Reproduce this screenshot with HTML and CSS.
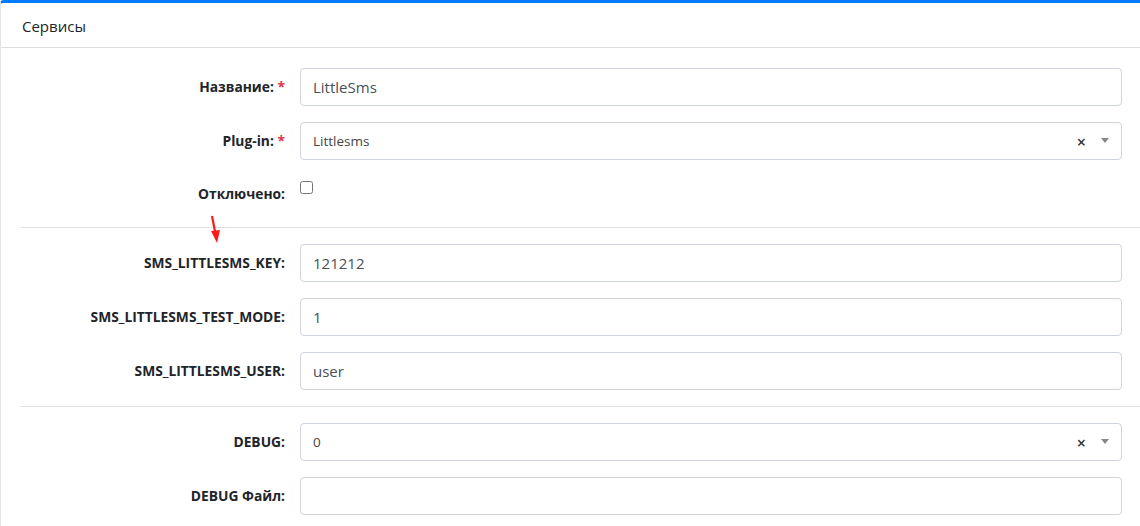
FILE: index.html
```html
<!DOCTYPE html>
<html lang="ru">
<head>
    <meta charset="UTF-8">
    <meta name="viewport" content="width=device-width, initial-scale=1.0">
    <title>Сервисы</title>
    <link rel="stylesheet" href="styles.css">
</head>
<body>
    <div class="card">
        <div class="card-header">Сервисы</div>
        <div class="card-body">
            <div class="form-row">
                <label class="col-label">Название: <span class="req">*</span></label>
                <div class="col-field"><input type="text" class="form-control" value="LittleSms"></div>
            </div>
            <div class="form-row">
                <label class="col-label">Plug-in: <span class="req">*</span></label>
                <div class="col-field">
                    <div class="select-box">
                        <span class="select-value">Littlesms</span>
                        <span class="select-clear">×</span>
                        <span class="select-arrow"></span>
                    </div>
                </div>
            </div>
            <div class="form-row check-row">
                <label class="col-label">Отключено:</label>
                <div class="col-field"><input type="checkbox" class="check"></div>
            </div>

            <hr>

            <div class="form-row">
                <label class="col-label">SMS_LITTLESMS_KEY:</label>
                <div class="col-field"><input type="text" class="form-control" value="121212"></div>
            </div>
            <div class="form-row">
                <label class="col-label">SMS_LITTLESMS_TEST_MODE:</label>
                <div class="col-field"><input type="text" class="form-control" value="1"></div>
            </div>
            <div class="form-row">
                <label class="col-label">SMS_LITTLESMS_USER:</label>
                <div class="col-field"><input type="text" class="form-control" value="user"></div>
            </div>

            <hr>

            <div class="form-row">
                <label class="col-label">DEBUG:</label>
                <div class="col-field">
                    <div class="select-box">
                        <span class="select-value">0</span>
                        <span class="select-clear">×</span>
                        <span class="select-arrow"></span>
                    </div>
                </div>
            </div>
            <div class="form-row">
                <label class="col-label">DEBUG Файл:</label>
                <div class="col-field"><input type="text" class="form-control" value=""></div>
            </div>
        </div>

        <!-- red pointer drawn over the screenshot -->
        <svg class="pointer" width="16" height="34" viewBox="0 0 16 34">
            <line x1="3" y1="2" x2="6.5" y2="20" stroke="#ff1a1a" stroke-width="2.2"/>
            <polygon points="2,17 11,16 8,29" fill="#ff1a1a"/>
        </svg>
    </div>
</body>
</html>
```

FILE: styles.css
```css
html, body {
    margin: 0;
    overflow: hidden;
}
body {
    font-family: "Open Sans", "Noto Sans", Arial, sans-serif;
    color: #212529;
    background: #fff;
}
.card {
    position: relative;
    width: 1160px;
    border: 1px solid #e2e3e5;
    border-top: 3px solid #007bff;
    border-radius: 4px 4px 0 0;
    box-shadow: 0 0 1px rgba(0,0,0,.125), 0 1px 3px rgba(0,0,0,.2);
    background: #fff;
}
.card-header {
    padding: 0 20px 0 21px;
    height: 44px;
    line-height: 47px;
    font-size: 15px;
    border-bottom: 1px solid #dcdde0;
}
.card-body {
    padding: 20px 0 20px 20px;
}
.form-row {
    display: grid;
    grid-template-columns: 264px 1fr;
    column-gap: 15px;
    padding-right: 39px;
    margin-bottom: 16px;
}
.col-label {
    text-align: right;
    font-size: 13.8px;
    font-weight: 700;
    line-height: 21px;
    padding-top: 8px;
    padding-bottom: 8px;
}
.check-row .col-label {
    padding-top: 7px;
    padding-bottom: 7px;
}
.req {
    color: #dc3545;
}
.form-control {
    display: block;
    box-sizing: border-box;
    width: 100%;
    height: 38px;
    padding: 6px 12px;
    font-family: "Open Sans", "Noto Sans", Arial, sans-serif;
    font-size: 15px;
    color: #495057;
    border: 1px solid #ced4da;
    border-radius: 4px;
    background: #fff;
    outline: none;
}
.select-box {
    display: flex;
    align-items: center;
    box-sizing: border-box;
    height: 38px;
    padding: 0 12px 0 12px;
    border: 1px solid #ced4da;
    border-radius: 4px;
    font-size: 13.5px;
    color: #444;
}
.select-value {
    flex: 1;
}
.select-clear {
    font-size: 16px;
    font-weight: 600;
    color: #333;
    margin-right: 15px;
    margin-top: 1px;
}
.select-arrow {
    width: 0;
    height: 0;
    border-left: 4px solid transparent;
    border-right: 4px solid transparent;
    border-top: 5px solid #888;
    margin-top: -2px;
}
.check {
    width: 13px;
    height: 13px;
    margin: 5px 0 0 0;
}
hr {
    border: 0;
    border-top: 1px solid #dee0e3;
    margin: 0 0 16px 0;
}
.pointer {
    position: absolute;
    left: 208px;
    top: 211px;
}
```
